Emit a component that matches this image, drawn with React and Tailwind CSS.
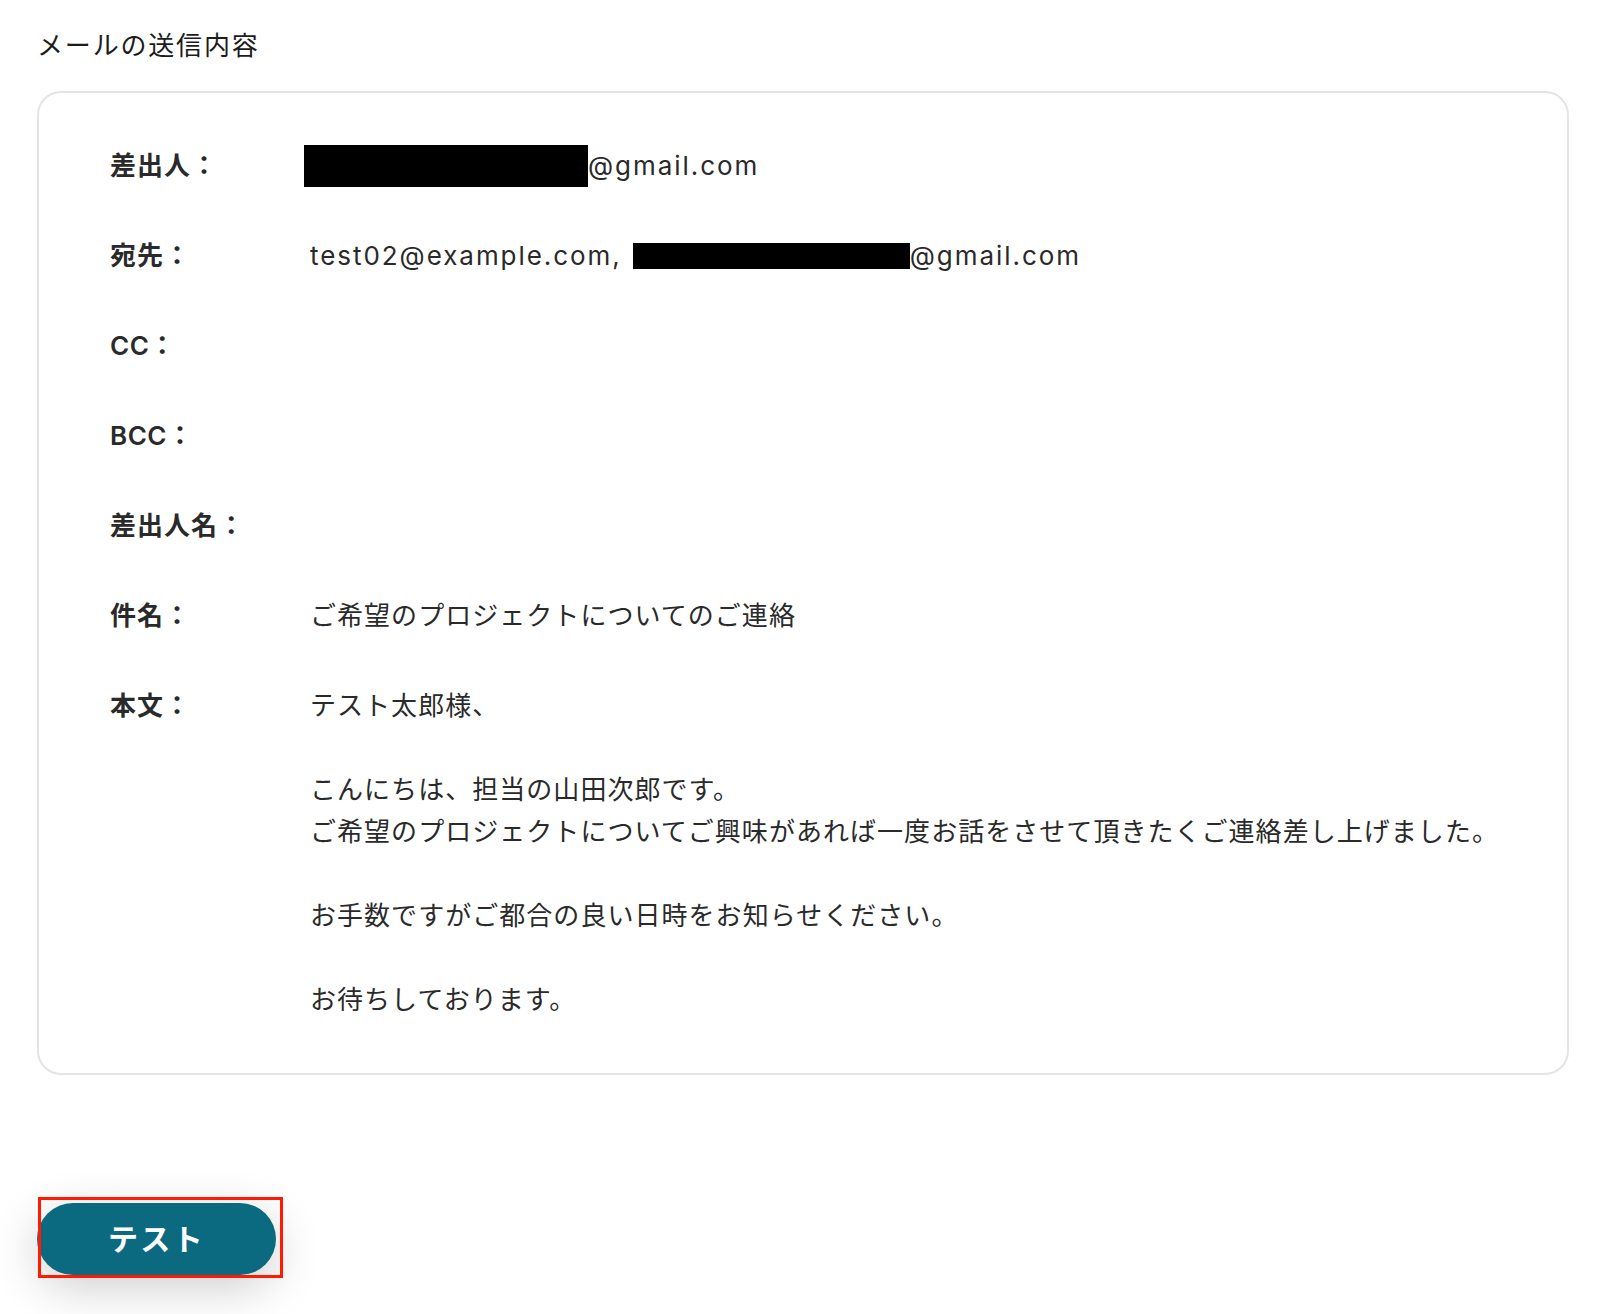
import React from 'react';

const font = { fontFamily: '"Inter", "Noto Sans CJK JP", sans-serif' };

const Redacted = ({ className }) => (
  <span className={`inline-block bg-black align-middle ${className}`} />
);

const Row = ({ label, children }) => (
  <div className="flex items-start">
    <div className="w-[200px] shrink-0 font-semibold text-[#2a2a2a]">{label}</div>
    <div className="flex-1 text-[#2a2a2a]">{children}</div>
  </div>
);

const App = () => {
  return (
    <div
      className="min-h-[1314px] bg-white pl-[37px] pr-[31px] pt-[27px] text-[26px] leading-[42px] tracking-[0.04em]"
      style={font}
    >
      <h2 className="text-[26px] leading-[38px] tracking-[0.07em] font-normal text-[#1c1c1c]">メールの送信内容</h2>

      <div className="mt-[26px] rounded-[24px] border-2 border-[#e4e4e4] pl-[71px] pr-[40px] pt-[52px] pb-[52px] flex flex-col gap-[48px]">
        <Row label="差出人：">
          <span className="flex items-center tracking-[0.075em]">
            <Redacted className="-ml-[6px] w-[284px] h-[42px]" />
            <span>@gmail.com</span>
          </span>
        </Row>
        <Row label="宛先：">
          <span className="flex items-center tracking-[0.075em]">
            <span>test02@example.com,</span>
            <Redacted className="ml-[11px] w-[277px] h-[26px]" />
            <span>@gmail.com</span>
          </span>
        </Row>
        <Row label={<span><span className="tracking-[0.02em]">CC</span>：</span>} />
        <Row label={<span><span className="tracking-[0.02em]">BCC</span>：</span>} />
        <Row label="差出人名：" />
        <Row label="件名：">ご希望のプロジェクトについてのご連絡</Row>
        <Row label="本文：">
          <p>テスト太郎様、</p>
          <p>&nbsp;</p>
          <p>こんにちは、担当の山田次郎です。</p>
          <p>ご希望のプロジェクトについてご興味があれば一度お話をさせて頂きたくご連絡差し上げました。</p>
          <p>&nbsp;</p>
          <p>お手数ですがご都合の良い日時をお知らせください。</p>
          <p>&nbsp;</p>
          <p>お待ちしております。</p>
        </Row>
      </div>

      <div className="mt-[128px] relative w-fit">
        <button
          type="button"
          className="w-[239px] h-[72px] rounded-full bg-[#0b6a80] text-white text-[30px] font-bold tracking-[0.08em] shadow-[0_12px_48px_rgba(0,0,0,0.2)]"
        >
          テスト
        </button>
        <div className="absolute left-[1px] -top-[6px] w-[245px] h-[81px] border-[3px] border-[#ff1a00] pointer-events-none" />
      </div>
    </div>
  );
};

export default App;
